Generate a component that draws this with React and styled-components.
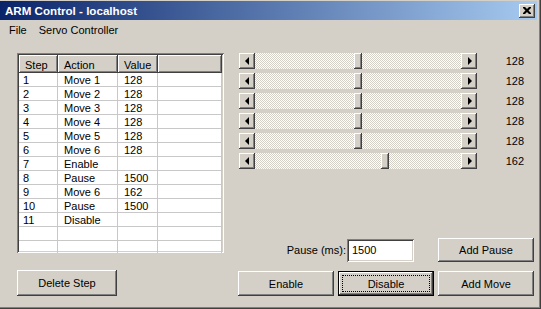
import React from 'react';
import styled, { createGlobalStyle, css } from 'styled-components';

const GlobalStyle = createGlobalStyle`
  html, body {
    margin: 0;
    padding: 0;
    background: #d4d0c8;
  }
  body {
    font-family: "Liberation Sans", Arial, sans-serif;
    font-size: 11px;
    color: #000;
  }
`;

// bordas estilo Windows clássico
const raised = css`
  box-shadow: inset -1px -1px #404040, inset 1px 1px #ffffff,
    inset -2px -2px #808080, inset 2px 2px #d4d0c8;
`;

const sunken = css`
  box-shadow: inset 1px 1px #808080, inset -1px -1px #ffffff,
    inset 2px 2px #404040, inset -2px -2px #d4d0c8;
`;

const Window = styled.div`
  width: 541px;
  height: 309px;
  box-sizing: border-box;
  padding: 0 4px 4px 0;
  background: #d4d0c8;
  display: flex;
  flex-direction: column;
  box-shadow: inset -1px -1px #404040, inset -2px -2px #808080;
  overflow: hidden;
`;

const TitleBar = styled.div`
  height: 19px;
  margin-top: 1px;
  display: flex;
  align-items: center;
  justify-content: space-between;
  padding: 0 2px 0 5px;
  background: linear-gradient(to right, #0a246a, #a6caf0);
  color: #fff;
  font-weight: bold;
  font-size: 11.6px;
`;

const CloseButton = styled.div`
  width: 16px;
  height: 14px;
  background: #d4d0c8;
  display: flex;
  align-items: center;
  justify-content: center;
  ${raised};
`;

const MenuBar = styled.div`
  height: 19px;
  display: flex;
  align-items: center;
  padding-left: 3px;
`;

const MenuItem = styled.span`
  padding: 0 6px;
`;

const Body = styled.div`
  flex: 1;
  display: grid;
  grid-template-columns: 207px 1fr;
  column-gap: 14px;
  padding: 14px 0 9px 17px;
`;

const LeftColumn = styled.div`
  display: flex;
  flex-direction: column;
  justify-content: space-between;
`;

const RightColumn = styled.div`
  display: flex;
  flex-direction: column;
  justify-content: space-between;
`;

const TableFrame = styled.div`
  height: 200px;
  background: #fff;
  padding: 2px;
  box-sizing: border-box;
  overflow: hidden;
  ${sunken};
`;

const Grid = styled.div`
  display: grid;
  grid-template-columns: 39px 60px 40px 1fr;
  grid-template-rows: 18px repeat(13, 14px);
`;

const HeaderCell = styled.div`
  background: #d4d0c8;
  padding: 1px 6px 0;
  display: flex;
  align-items: center;
  ${raised};
`;

const Cell = styled.div`
  padding: 1px 6px 0;
  line-height: 13px;
  border-right: 1px solid #c8c8c8;
  border-bottom: 1px solid #c8c8c8;
  white-space: nowrap;
  ${(p) => p.$first && 'padding-left: 4px;'}
`;

const Button = styled.div`
  width: ${(p) => p.$w || 96}px;
  height: ${(p) => p.$h || 25}px;
  box-sizing: border-box;
  display: flex;
  align-items: center;
  justify-content: center;
  background: #d4d0c8;
  position: relative;
  ${raised};
  ${(p) =>
    p.$default &&
    css`
      box-shadow: inset 0 0 0 1px #000, inset -2px -2px #404040,
        inset 2px 2px #ffffff, inset -3px -3px #808080;
      &::after {
        content: '';
        position: absolute;
        inset: 4px;
        border: 1px dotted #000;
      }
    `}
`;

const Sliders = styled.div`
  display: flex;
  flex-direction: column;
  gap: 4px;
`;

const SliderRow = styled.div`
  display: flex;
  align-items: center;
  height: 16px;
`;

const ScrollBar = styled.div`
  width: 238px;
  height: 16px;
  margin-left: 1px;
  display: flex;
`;

const Track = styled.div`
  flex: 1;
  position: relative;
  background: repeating-conic-gradient(#ffffff 0 25%, #d4d0c8 0 50%) 0 0 / 2px
    2px;
`;

const Thumb = styled.div`
  position: absolute;
  top: 0;
  width: 8px;
  height: 16px;
  background: #d4d0c8;
  ${raised};
`;

const ArrowButton = styled.div`
  width: 16px;
  height: 16px;
  box-sizing: border-box;
  background: #d4d0c8;
  display: flex;
  align-items: center;
  justify-content: center;
  ${raised};
`;

const Arrow = styled.span`
  width: 0;
  height: 0;
  border-top: 4px solid transparent;
  border-bottom: 4px solid transparent;
  ${(p) =>
    p.$dir === 'left'
      ? 'border-right: 4px solid #000; margin-left: -1px;'
      : 'border-left: 4px solid #000; margin-left: 1px;'}
`;

const Value = styled.span`
  width: 47px;
  text-align: right;
`;

const Controls = styled.div`
  display: flex;
  flex-direction: column;
  gap: 9px;
`;

const PauseRow = styled.div`
  display: flex;
  align-items: center;
  justify-content: flex-end;
  padding-right: 4px;
`;

const Label = styled.span`
  margin-right: 1px;
`;

const Input = styled.div`
  width: 67px;
  height: 23px;
  box-sizing: border-box;
  background: #fff;
  padding: 0 5px;
  display: flex;
  align-items: center;
  margin-right: 24px;
  ${sunken};
`;

const ButtonRow = styled.div`
  display: flex;
  gap: 4px;
  padding-right: 4px;
`;

const steps = [
  ['1', 'Move 1', '128'],
  ['2', 'Move 2', '128'],
  ['3', 'Move 3', '128'],
  ['4', 'Move 4', '128'],
  ['5', 'Move 5', '128'],
  ['6', 'Move 6', '128'],
  ['7', 'Enable', ''],
  ['8', 'Pause', '1500'],
  ['9', 'Move 6', '162'],
  ['10', 'Pause', '1500'],
  ['11', 'Disable', ''],
  ['', '', ''],
  ['', '', ''],
];

const servos = [128, 128, 128, 128, 128, 162];

const Slider = ({ value }) => {
  const pos = Math.round((value / 255) * 198);
  return (
    <ScrollBar>
      <ArrowButton>
        <Arrow $dir="left" />
      </ArrowButton>
      <Track>
        <Thumb style={{ left: pos }} />
      </Track>
      <ArrowButton>
        <Arrow $dir="right" />
      </ArrowButton>
    </ScrollBar>
  );
};

const App = () => {
  return (
    <>
      <GlobalStyle />
      <Window>
        <TitleBar>
          <span>ARM Control - localhost</span>
          <CloseButton>
            <svg width="8" height="7" viewBox="0 0 8 7">
              <path
                d="M0 0h2l2 2 2-2h2v1l-2.5 2.5L8 6v1H6L4 5 2 7H0V6l2.5-2.5L0 1z"
                fill="#000"
              />
            </svg>
          </CloseButton>
        </TitleBar>
        <MenuBar>
          <MenuItem>File</MenuItem>
          <MenuItem>Servo Controller</MenuItem>
        </MenuBar>
        <Body>
          <LeftColumn>
            <TableFrame>
              <Grid>
                <HeaderCell>Step</HeaderCell>
                <HeaderCell>Action</HeaderCell>
                <HeaderCell>Value</HeaderCell>
                <HeaderCell />
                {steps.map((row, i) => (
                  <React.Fragment key={i}>
                    <Cell $first>{row[0]}</Cell>
                    <Cell>{row[1]}</Cell>
                    <Cell>{row[2]}</Cell>
                    <Cell />
                  </React.Fragment>
                ))}
              </Grid>
            </TableFrame>
            <Button $w={100} $h={26}>
              Delete Step
            </Button>
          </LeftColumn>
          <RightColumn>
            <Sliders>
              {servos.map((v, i) => (
                <SliderRow key={i}>
                  <Slider value={v} />
                  <Value>{v}</Value>
                </SliderRow>
              ))}
            </Sliders>
            <Controls>
              <PauseRow>
                <Label>Pause (ms):</Label>
                <Input>1500</Input>
                <Button $w={96} $h={24}>
                  Add Pause
                </Button>
              </PauseRow>
              <ButtonRow>
                <Button>Enable</Button>
                <Button $default>Disable</Button>
                <Button>Add Move</Button>
              </ButtonRow>
            </Controls>
          </RightColumn>
        </Body>
      </Window>
    </>
  );
};

export default App;
